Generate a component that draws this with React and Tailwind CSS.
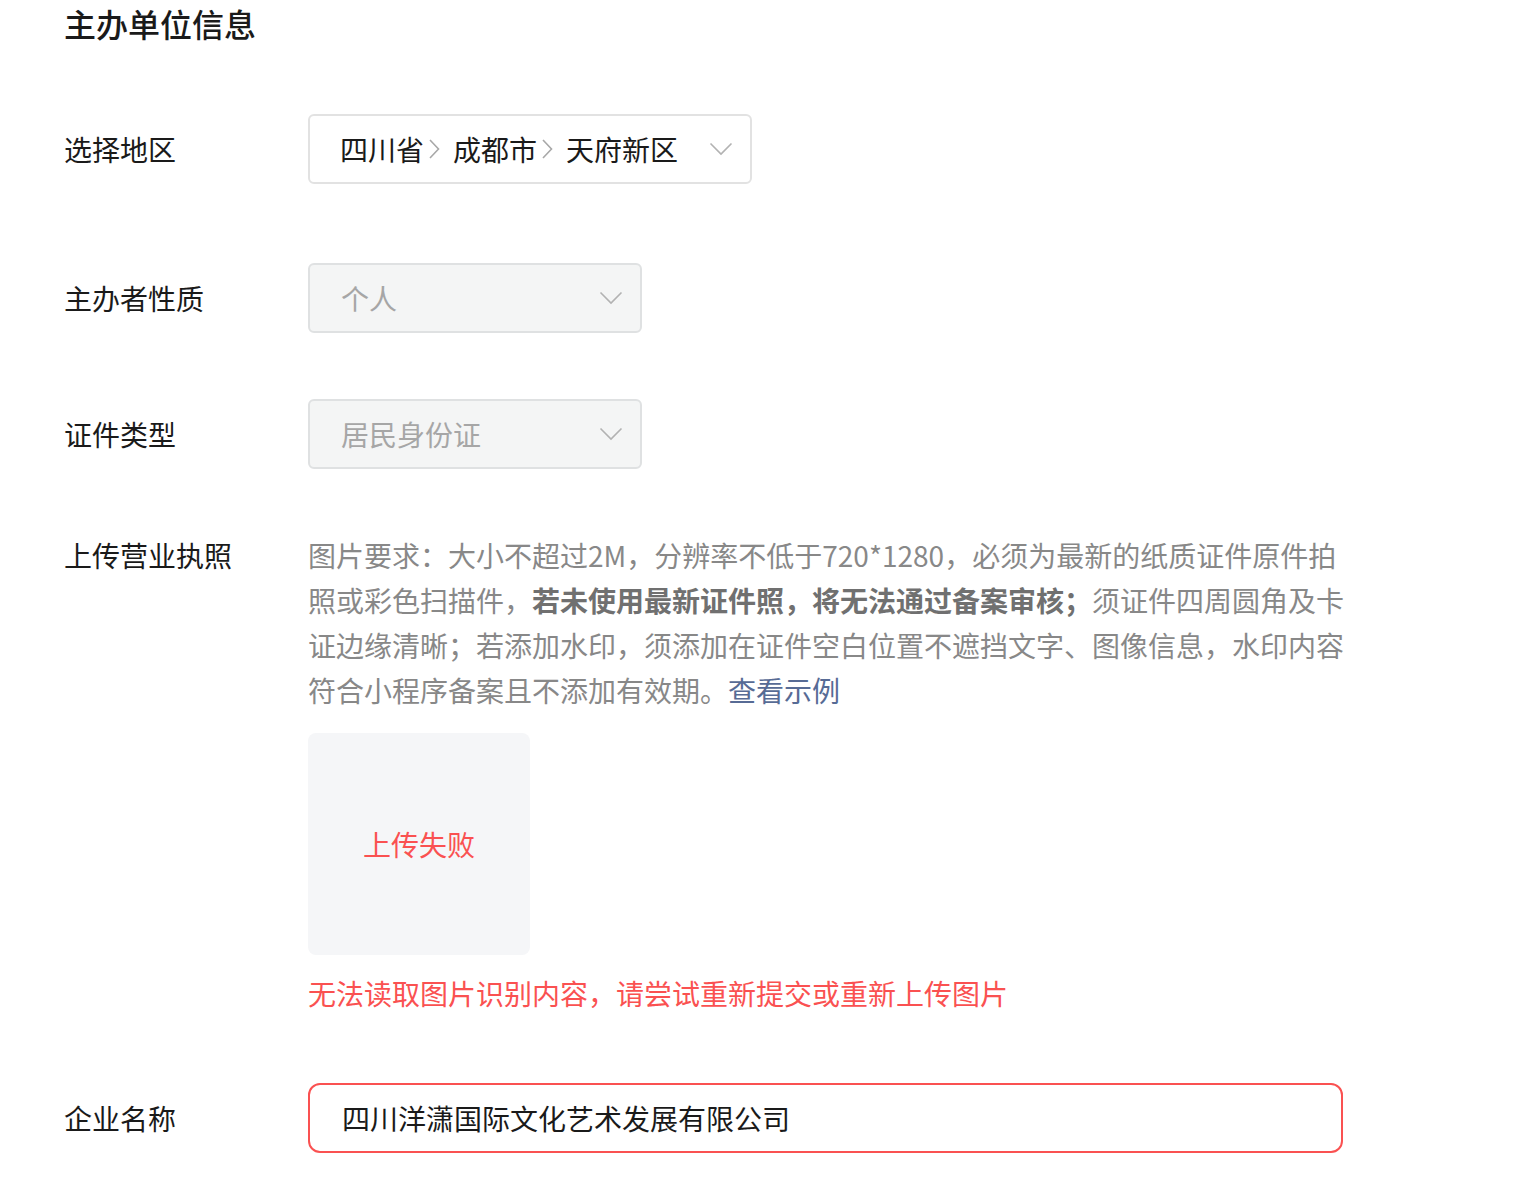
import React from "react";

const font = { fontFamily: '"Noto Sans CJK SC", "Noto Sans", sans-serif' };

const ChevronDown = () => (
  <svg width="24" height="14" viewBox="0 0 24 14" fill="none">
    <path d="M1.5 1.5L12 12L22.5 1.5" stroke="#b2b2b2" strokeWidth="1.6" />
  </svg>
);

const ChevronRight = () => (
  <svg width="12" height="22" viewBox="0 0 12 22" fill="none" className="ml-[4px] mr-[13px]">
    <path d="M2 2L10.5 11L2 20" stroke="#a8a8a8" strokeWidth="1.6" />
  </svg>
);

const Row = ({ label, children, className = "", top = false }) => (
  <div className={`flex ${top ? "items-start" : "items-center"} ${className}`}>
    <div className={`w-[244px] shrink-0 text-[28px] text-[#1a1a1a] ${top ? "leading-[45px]" : ""}`}>{label}</div>
    {children}
  </div>
);

export default function App() {
  return (
    <div className="min-h-screen w-full bg-white pl-[64px]" style={font}>
      <h1 className="pt-[3px] text-[32px] font-medium leading-[40px] text-[#1a1a1a]">主办单位信息</h1>

      {/* 选择地区 */}
      <Row label="选择地区" className="mt-[71px]">
        <div className="flex h-[70px] w-[444px] items-center rounded-[6px] border-2 border-[#e2e2e2] bg-white pl-[30px] pr-[17px]">
          <span className="text-[28px] text-[#1a1a1a]">四川省</span>
          <ChevronRight />
          <span className="text-[28px] text-[#1a1a1a]">成都市</span>
          <ChevronRight />
          <span className="text-[28px] text-[#1a1a1a]">天府新区</span>
          <div className="ml-auto flex items-center">
            <ChevronDown />
          </div>
        </div>
      </Row>

      {/* 主办者性质 */}
      <Row label="主办者性质" className="mt-[79px]">
        <div className="flex h-[70px] w-[334px] items-center rounded-[6px] border-2 border-[#dfe1e2] bg-[#f4f5f5] pl-[31px] pr-[17px]">
          <span className="text-[28px] text-[#a6a6a6]">个人</span>
          <div className="ml-auto flex items-center">
            <ChevronDown />
          </div>
        </div>
      </Row>

      {/* 证件类型 */}
      <Row label="证件类型" className="mt-[66px]">
        <div className="flex h-[70px] w-[334px] items-center rounded-[6px] border-2 border-[#dfe1e2] bg-[#f4f5f5] pl-[31px] pr-[17px]">
          <span className="text-[28px] text-[#a6a6a6]">居民身份证</span>
          <div className="ml-auto flex items-center">
            <ChevronDown />
          </div>
        </div>
      </Row>

      {/* 上传营业执照 */}
      <Row label="上传营业执照" className="mt-[64px]" top>
        <div className="flex flex-col">
          <p className="w-[1040px] text-[28px] leading-[45px] text-[#888888]">
            图片要求：大小不超过2M，分辨率不低于720*1280，必须为最新的纸质证件原件拍照或彩色扫描件，
            <span className="font-bold text-[#707070]">若未使用最新证件照，将无法通过备案审核；</span>
            须证件四周圆角及卡证边缘清晰；若添加水印，须添加在证件空白位置不遮挡文字、图像信息，水印内容符合小程序备案且不添加有效期。
            <span className="text-[#576b95]">查看示例</span>
          </p>
          <div className="mt-[20px] flex h-[222px] w-[222px] items-center justify-center rounded-[8px] bg-[#f5f6f8]">
            <span className="text-[28px] text-[#fa5151]">上传失败</span>
          </div>
          <p className="mt-[16px] text-[28px] leading-[45px] text-[#fa5151]">
            无法读取图片识别内容，请尝试重新提交或重新上传图片
          </p>
        </div>
      </Row>

      {/* 企业名称 */}
      <Row label="企业名称" className="mt-[67px]">
        <div className="flex h-[70px] w-[1035px] items-center rounded-[12px] border-2 border-[#fa5151] bg-white pl-[32px]">
          <span className="text-[28px] text-[#1a1a1a]">四川洋潇国际文化艺术发展有限公司</span>
        </div>
      </Row>
    </div>
  );
}
